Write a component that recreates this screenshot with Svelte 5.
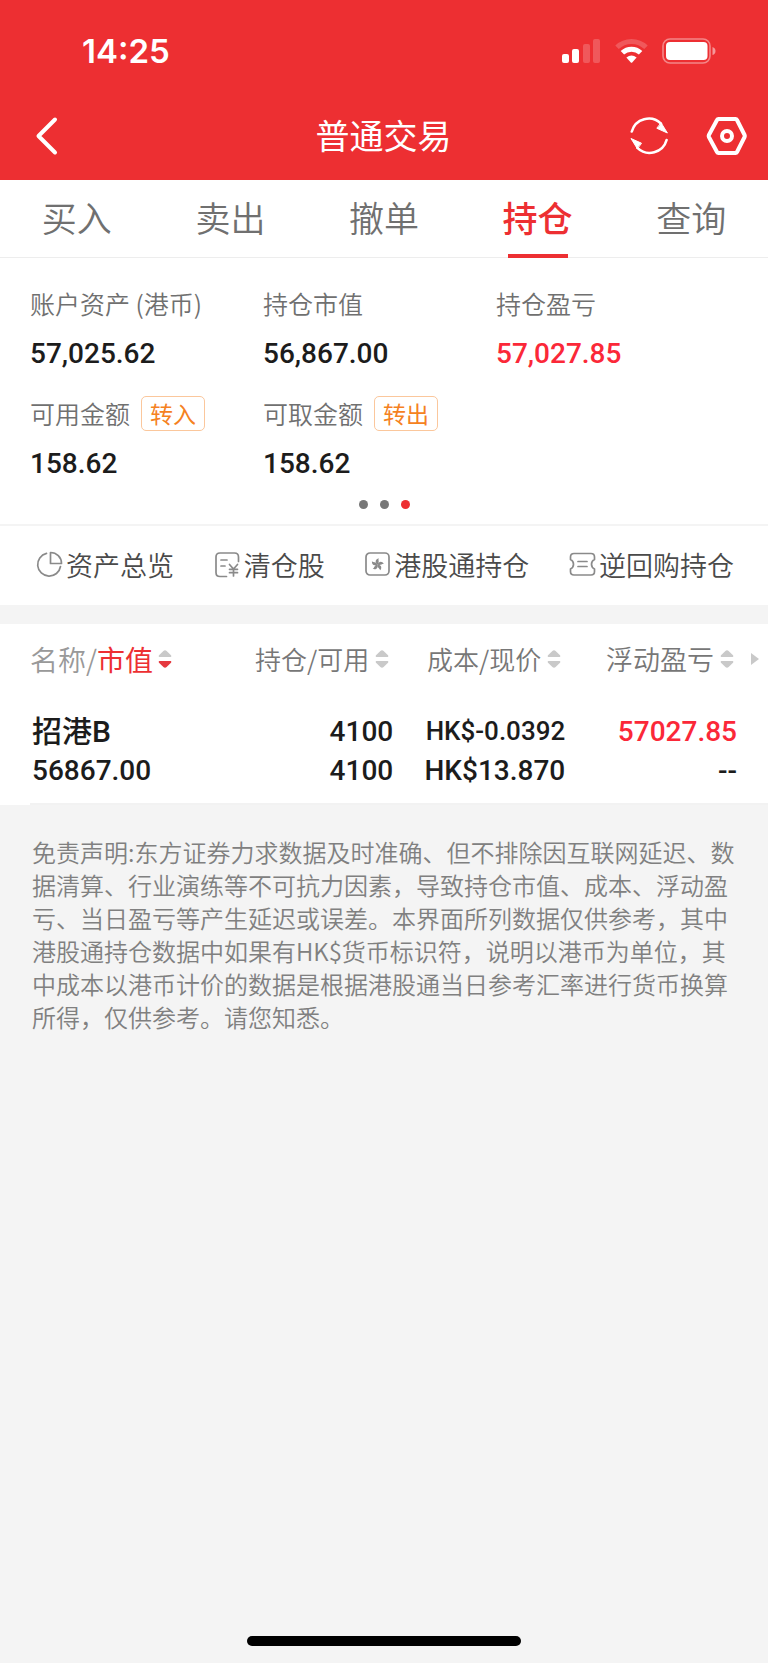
<script>
  const tabs = ['买入', '卖出', '撤单', '持仓', '查询'];
  let activeTab = $state('持仓');

  const summary = [
    { label: '账户资产 (港币)', value: '57,025.62' },
    { label: '持仓市值', value: '56,867.00' },
    { label: '持仓盈亏', value: '57,027.85', up: true },
    { label: '可用金额', value: '158.62', action: '转入' },
    { label: '可取金额', value: '158.62', action: '转出' }
  ];

  const links = [
    { text: '资产总览', icon: 'pie' },
    { text: '清仓股', icon: 'bill' },
    { text: '港股通持仓', icon: 'flower' },
    { text: '逆回购持仓', icon: 'ticket' }
  ];

  const holdings = [
    {
      name: '招港B',
      marketValue: '56867.00',
      held: '4100',
      available: '4100',
      cost: 'HK$-0.0392',
      price: 'HK$13.870',
      profit: '57027.85',
      ratio: '--'
    }
  ];
</script>

{#snippet sorter(down)}
  <svg class="sorter" viewBox="0 0 14 18" aria-hidden="true">
    <path d="M5.4 1Q7-.4 8.6 1L13 5.2Q13.8 6.8 12.6 7H1.4Q.2 6.8 1 5.2Z" fill="#c9c9c9" />
    <path d="M5.4 17Q7 18.4 8.6 17L13 12.8Q13.8 11.2 12.6 11H1.4Q.2 11.2 1 12.8Z" fill={down ? '#e5393f' : '#c9c9c9'} />
  </svg>
{/snippet}

<div class="page" lang="zh-CN">
  <header>
    <div class="status">
      <time>14:25</time>
      <div class="signals">
        <svg width="39" height="26" viewBox="0 0 39 26" fill="#fff" aria-hidden="true">
          <rect x="0" y="16" width="7" height="9" rx="2" />
          <rect x="10" y="11" width="7" height="14" rx="2" />
          <rect x="21" y="6" width="7" height="19" rx="2" opacity=".2" />
          <rect x="31" y="1" width="7" height="24" rx="2" opacity=".2" />
        </svg>
        <svg width="33" height="26" viewBox="0 0 33 26" fill="none" aria-hidden="true">
          <path d="M2 9.2A21 21 0 0 1 31 9.2" stroke="#fff" stroke-width="5" opacity=".2" />
          <path d="M7.4 14.8A13.2 13.2 0 0 1 25.6 14.8" stroke="#fff" stroke-width="5" />
          <path d="M11.4 19.6Q16.5 15.4 21.6 19.6L17.2 24.4Q16.5 25 15.8 24.4Z" fill="#fff" />
        </svg>
        <svg width="54" height="26" viewBox="0 0 54 26" aria-hidden="true">
          <rect x="1" y="1" width="47" height="24" rx="7" fill="none" stroke="#fff" stroke-width="1.6" opacity=".42" />
          <rect x="4" y="4" width="41.500" height="18" rx="4" fill="#fff" />
          <path d="M50.500 9Q53.500 10 53.500 13T50.500 17Z" fill="#fff" opacity=".5" />
        </svg>
      </div>
    </div>
    <div class="bar">
      <button class="icon back" aria-label="返回">
        <svg width="24" height="40" viewBox="0 0 24 40" fill="none" stroke="#fff" stroke-width="4" stroke-linecap="round" stroke-linejoin="round"><path d="M20 3.500L3.500 20L20 36.500" /></svg>
      </button>
      <h1>普通交易</h1>
      <div class="tools">
        <button class="icon" aria-label="刷新">
          <svg width="40" height="40" viewBox="0 0 40 40" fill="none" stroke="#fff" stroke-width="2.600" stroke-linecap="round">
            <path d="M2.800 15.500A17.600 17.600 0 0 1 32 7.600" />
            <path d="M37.600 24A17.600 17.600 0 0 1 8.400 31.900" />
            <path d="M32.200 7L38.400 17L28.200 12.400Z" fill="#fff" stroke-width="1" stroke-linejoin="round" />
            <path d="M8.200 32.500L2 22.500L12.200 27.100Z" fill="#fff" stroke-width="1" stroke-linejoin="round" />
          </svg>
        </button>
        <button class="icon" aria-label="设置">
          <svg width="42" height="40" viewBox="0 0 42 40" fill="none" stroke="#fff" stroke-width="4" stroke-linejoin="round">
            <path d="M12.500 3H29.500Q30.500 3 31 4L38.600 19Q39.100 20 38.600 21L31 36Q30.500 37 29.500 37H12.500Q11.500 37 11 36L2.900 21Q2.400 20 2.900 19L11 4Q11.500 3 12.500 3Z" />
            <circle cx="21" cy="20" r="5" />
          </svg>
        </button>
      </div>
    </div>
  </header>

  <nav class="tabs">
    {#each tabs as tab}
      <button class:active={tab === activeTab} onclick={() => (activeTab = tab)}>{tab}</button>
    {/each}
  </nav>

  <section class="summary">
    <dl>
      {#each summary as item}
        <div class="entry">
          <dt>{item.label}{#if item.action}<button>{item.action}</button>{/if}</dt>
          <dd class:up={item.up}>{item.value}</dd>
        </div>
      {/each}
    </dl>
    <div class="dots"><i></i><i></i><i class="on"></i></div>
  </section>

  <nav class="links">
    {#each links as link}
      <button>
        <svg width="27" height="27" viewBox="0 0 27 27" fill="none" stroke="#8a8a8a" stroke-width="1.700" stroke-linecap="round" stroke-linejoin="round" aria-hidden="true">
          {#if link.icon === 'pie'}
            <path d="M10.500 2.400A11.500 11.500 0 1 0 24.500 15.500" />
            <path d="M14.500 1.500V12.500H25.500A11 11 0 0 0 14.500 1.500Z" />
          {:else if link.icon === 'bill'}
            <path d="M12.500 25.500H6Q2 25.500 2 21.500V6Q2 2 6 2H20.500Q24.500 2 24.500 6V10.500" />
            <path d="M7 9H13M7 15H11" />
            <path d="M15.500 13.500L19.500 18L23.500 13.500M19.500 18V25M15.500 18.300H23.500M15.500 21.700H23.500" />
          {:else if link.icon === 'flower'}
            <rect x="2" y="2" width="23" height="22" rx="4" />
            <g fill="#8a8a8a" stroke="none">
              {#each [0, 72, 144, 216, 288] as angle}
                <path transform="rotate({angle} 13.5 13.5)" d="M13.500 13.500C10.500 11 11.500 8 14.800 7.200C13.800 9.500 16 11 13.500 13.500Z" />
              {/each}
            </g>
          {:else}
            <path d="M5 2.500H22Q25.500 2.500 25.500 6V8.500Q22.500 10 22.500 13.200T25.500 18V20.500Q25.500 24 22 24H5Q1.500 24 1.500 20.500V18Q4.500 16.400 4.500 13.200T1.500 8.500V6Q1.500 2.500 5 2.500Z" />
            <path d="M9 10.500H18M9 15.500H18" />
          {/if}
        </svg>
        {link.text}
      </button>
    {/each}
  </nav>

  <section class="holdings">
    <table>
      <thead>
        <tr>
          <th><button class="first">名称/<em>市值</em>{@render sorter(true)}</button></th>
          <th><button class="mid">持仓/可用{@render sorter(false)}</button></th>
          <th><button class="mid">成本/现价{@render sorter(false)}</button></th>
          <th><button>浮动盈亏{@render sorter(false)}</button><svg class="more" viewBox="0 0 8 12" aria-hidden="true"><path d="M0 0L8 6L0 12Z" fill="#c9c9c9" /></svg></th>
        </tr>
      </thead>
      <tbody>
        {#each holdings as row}
          <tr>
            <td><span class="name">{row.name}</span><span>{row.marketValue}</span></td>
            <td><span>{row.held}</span><span>{row.available}</span></td>
            <td><span class="long">{row.cost}</span><span>{row.price}</span></td>
            <td><span class="up">{row.profit}</span><span>{row.ratio}</span></td>
          </tr>
        {/each}
      </tbody>
    </table>
  </section>

  <p class="disclaimer">免责声明:东方证券力求数据及时准确、但不排除因互联网延迟、数据清算、行业演练等不可抗力因素，导致持仓市值、成本、浮动盈亏、当日盈亏等产生延迟或误差。本界面所列数据仅供参考，其中港股通持仓数据中如果有HK$货币标识符，说明以港币为单位，其中成本以港币计价的数据是根据港股通当日参考汇率进行货币换算所得，仅供参考。请您知悉。</p>

  <div class="home"></div>
</div>

<style>
  :global(body) {
    margin: 0;
    background: #f4f4f4;
  }
  .page {
    display: flex;
    flex-direction: column;
    min-height: 100vh;
    background: #f4f4f4;
    color: #1c1c1c;
    font-family: 'Noto Sans CJK SC', sans-serif;
    font-weight: 350;
  }
  button {
    margin: 0;
    padding: 0;
    border: 0;
    background: none;
    color: inherit;
    font: inherit;
    white-space: nowrap;
    cursor: pointer;
  }
  svg {
    display: block;
    flex: none;
  }
  header {
    background: #ed2f32;
    color: #fff;
  }
  .status {
    display: flex;
    align-items: center;
    justify-content: space-between;
    height: 82px;
    padding: 10px 52px 0 82px;
  }
  time {
    font: 600 33px/40px Inter, sans-serif;
  }
  .signals {
    display: flex;
    gap: 14px;
  }
  .bar {
    display: grid;
    grid-template-columns: 1fr auto 1fr;
    align-items: center;
    height: 88px;
    padding: 0 20px 0 35px;
  }
  .icon.back {
    justify-self: start;
  }
  h1 {
    margin: 0 16px 2px 0;
    font-size: 34px;
    font-weight: 400;
    line-height: 48px;
  }
  .tools {
    display: flex;
    justify-content: flex-end;
    gap: 37px;
  }
  .tabs {
    display: grid;
    grid-template-columns: repeat(5, 1fr);
    height: 77px;
    border-bottom: 1px solid #ededed;
    background: #fff;
  }
  .tabs button {
    position: relative;
    padding-bottom: 4px;
    color: #707070;
    font-size: 35px;
    line-height: 73px;
  }
  .tabs .active {
    color: #ed2f32;
    font-weight: 500;
  }
  .tabs .active::after {
    content: '';
    position: absolute;
    left: 50%;
    bottom: -1px;
    width: 60px;
    height: 4px;
    margin-left: -30px;
    background: #ed2f32;
  }
  .summary {
    padding: 20px 0 15px;
    border-bottom: 2px solid #f4f4f4;
    background: #fff;
  }
  dl {
    display: grid;
    grid-template-columns: 1fr 1fr 1fr;
    row-gap: 8px;
    margin: 0;
    padding: 0 39px 0 30px;
  }
  dt {
    display: flex;
    align-items: center;
    gap: 11px;
    height: 50px;
    color: #707070;
    font-size: 25px;
    white-space: nowrap;
  }
  dt button {
    padding: 0 8px;
    border: 1px solid #fbc79c;
    border-radius: 5px;
    color: #f5821f;
    font-size: 23px;
    font-weight: 400;
    line-height: 33px;
  }
  dd {
    margin: 0;
    font: 500 28px/52px Roboto, sans-serif;
  }
  .up {
    color: #fb2838;
  }
  .dots {
    display: flex;
    justify-content: center;
    gap: 12px;
    margin-top: 10px;
  }
  .dots i {
    width: 9px;
    height: 9px;
    border-radius: 50%;
    background: #777;
  }
  .dots .on {
    background: #ed2f32;
  }
  .links {
    display: flex;
    align-items: center;
    justify-content: space-between;
    height: 77px;
    padding: 0 34px 2px 36px;
    background: #fff;
    color: #4a4a4a;
    font-size: 27px;
  }
  .links button {
    display: flex;
    align-items: center;
    gap: 3px;
  }
  .holdings {
    margin-top: 19px;
    background: #fff;
  }
  .holdings::after {
    content: '';
    display: block;
    height: 2px;
    margin-left: 30px;
    background: #f2f2f2;
  }
  table {
    width: 100%;
    border-collapse: collapse;
    table-layout: fixed;
  }
  th {
    position: relative;
    box-sizing: border-box;
    width: 22.4%;
    height: 72px;
    padding: 0 4px 3px 0;
    color: #777;
    font-size: 27px;
    font-weight: 350;
  }
  th:first-child {
    width: 28.8%;
    padding-left: 30px;
  }
  th:last-child {
    width: 26.4%;
    padding-right: 34px;
  }
  th button {
    display: flex;
    align-items: center;
    gap: 6px;
    margin-left: auto;
  }
  th .mid {
    font-size: 26px;
  }
  th .first {
    gap: 0;
    margin-left: 0;
    color: #999;
    font-size: 28px;
  }
  .sorter {
    width: 14px;
    height: 18px;
  }
  .first .sorter {
    margin-left: 5px;
  }
  em {
    color: #ed2f32;
    font-style: normal;
    font-weight: 400;
  }
  .more {
    position: absolute;
    top: 50%;
    right: 9px;
    width: 8px;
    height: 12px;
    margin-top: -7px;
  }
  td {
    padding: 16px 0 13px;
    font: 500 28px/39px Roboto, 'Noto Sans CJK SC', sans-serif;
    text-align: right;
  }
  td:first-child {
    padding-left: 32px;
    text-align: left;
  }
  td:last-child {
    padding-right: 31px;
  }
  td span {
    display: block;
    height: 39px;
  }
  td .long {
    font-size: 26px;
  }
  td .name {
    font-size: 30px;
  }
  .disclaimer {
    margin: 0;
    padding: 30px 32px;
    color: #808080;
    font-size: 24px;
    line-height: 33px;
  }
  .home {
    width: 274px;
    height: 10px;
    margin: auto auto 17px;
    border-radius: 5px;
    background: #000;
  }
</style>
